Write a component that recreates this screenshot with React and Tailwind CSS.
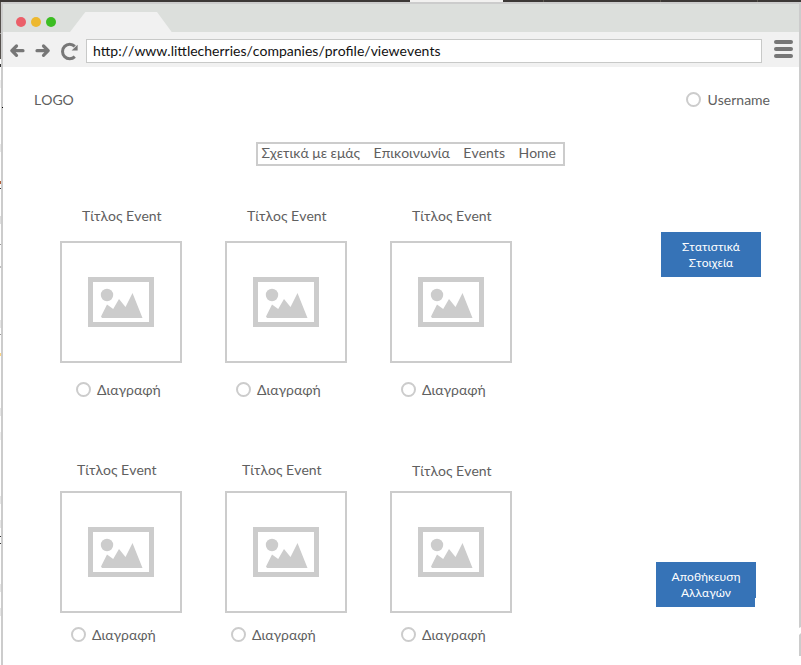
const rows = [
  [
    { title: 'pl-[22px]', action: 'pl-4' },
    { title: 'pl-[22px]', action: 'pl-[11px]' },
    { title: 'pl-[22px]', action: 'pl-[11px]' },
  ],
  [
    { title: 'pl-[17px]', action: 'pl-[11px]' },
    { title: 'pl-[17px]', action: 'pl-[6px]' },
    { title: 'pl-[22px] pt-px', action: 'pl-[11px]' },
  ],
];

const specks = [
  'top-[2px] h-[57px] bg-[#55504c]',
  'top-[33px] h-px bg-[#a5a2a0]',
  'top-[59px] h-[5px] bg-white',
  'top-[64px] h-[3px] bg-[#333333]',
  'top-[80px] h-[8px] bg-[#eeeeee]',
  'top-[144px] h-[8px] bg-[#e8e8e8]',
  'top-[181px] h-[3px] bg-[#b5603a]',
  'top-[188px] h-px bg-[#333333]',
  'top-[216px] h-[8px] bg-[#dedede]',
  'top-[244px] h-px bg-[#999999]',
  'top-[266px] h-[2px] bg-[#c0c0c0]',
  'top-[320px] h-[8px] bg-[#e6e6e6]',
  'top-[334px] h-px bg-[#999999]',
  'top-[353px] h-[3px] bg-[#ffd580]',
  'top-[408px] h-[8px] bg-[#e6e6e6]',
  'top-[432px] h-[8px] bg-[#eeeeee]',
  'top-[496px] h-[8px] bg-[#e6e6e6]',
  'top-[520px] h-[8px] bg-[#e6e6e6]',
  'top-[536px] h-px bg-[#333333]',
  'top-[543px] h-px bg-[#333333]',
  'top-[584px] h-[8px] bg-[#e6e6e6]',
  'top-[608px] h-[8px] bg-[#e6e6e6]',
];

function Radio() {
  return <span className="mb-px size-[15px] shrink-0 rounded-full border-2 border-[#cccccc] bg-white" />;
}

function Placeholder() {
  return (
    <div className="flex size-[122px] shrink-0 items-center justify-center border-2 border-[#cccccc]">
      <svg width="66" height="50" viewBox="0 0 66 50" fill="#cccccc">
        <path fillRule="evenodd" d="M0 0H66V50H0ZM5 5V45H61V5Z" />
        <circle cx="19" cy="18" r="6.2" />
        <path d="M13 39.5L19 27.5L25.2 32L31 22L37.5 30L44.5 16L54.5 41H14Z" />
      </svg>
    </div>
  );
}

function EventCard({ title, action, second }) {
  return (
    <div className="flex w-[122px] flex-col">
      <div className={`whitespace-nowrap leading-5 ${second ? 'h-[31px]' : 'h-[35px]'} ${title}`}>Τίτλος Event</div>
      <Placeholder />
      <div className={`flex items-center gap-[6px] whitespace-nowrap leading-5 ${second ? 'mt-3' : 'mt-[17px]'} ${action}`}>
        <Radio />
        <span>Διαγραφή</span>
      </div>
    </div>
  );
}

function Toolbar() {
  return (
    <div className="flex h-[35px] items-center bg-[#f1f1f1]">
      <svg className="shrink-0" width="83" height="35" fill="none" stroke="#777777" strokeWidth="3.2" strokeLinecap="round" strokeLinejoin="round">
        <path d="M20 18.7H9.5M13.5 14L8.8 18.7L13.5 23.4" />
        <path d="M34 18.7H44.5M40.5 14L45.2 18.7L40.5 23.4" />
        <path d="M71.8 24.6A7.2 7.2 0 1 1 71.8 14.4" strokeWidth="3" strokeLinecap="butt" />
        <path d="M74.6 12.8V18.4H68.6Z" fill="#777777" stroke="none" />
      </svg>
      <div className="mt-[3px] flex h-6 w-[676px] items-center border border-[#c8c9c8] bg-white pl-[6px] text-[14px] leading-5 text-[#111111]">
        http://www.littlecherries/companies/profile/viewevents
      </div>
      <div className="-mt-px ml-3 flex w-[19px] flex-col gap-[3px]">
        <span className="h-1 rounded-full bg-[#777777]" />
        <span className="h-1 rounded-full bg-[#777777]" />
        <span className="h-1 rounded-full bg-[#777777]" />
      </div>
    </div>
  );
}

export default function App() {
  return (
    <div className="relative h-[665px] w-[801px] overflow-hidden bg-white font-['Lato','Noto_Sans',sans-serif] text-[14px] text-[#606060] [font-kerning:none]">
      <div className="flex h-[2px] bg-[#3c3836]">
        <span className="ml-[410px] w-[93px] bg-[#f2f1f0]" />
        <span className="ml-[40px] w-px bg-[#5b574f]" />
        <span className="ml-[116px] w-px bg-[#5b574f]" />
        <span className="ml-[96px] w-px bg-[#5b574f]" />
      </div>
      <div className="ml-px h-[663px] border-x-2 border-t-2 border-[#cccccc] bg-white">
        <div className="flex h-7 bg-[#dcdfdc]">
          <div className="flex w-[67px] items-start gap-[5.5px] pl-[13.3px] pt-[13px]">
            <span className="size-[9.5px] shrink-0 rounded-full bg-[#eb5f69]" />
            <span className="size-[9.5px] shrink-0 rounded-full bg-[#edb82f]" />
            <span className="size-[9.5px] shrink-0 rounded-full bg-[#3bbd22]" />
          </div>
          <svg width="102" height="28" fill="#f1f1f1"><path d="M0 28L15.3 8H87L101.7 28Z" /></svg>
        </div>
        <Toolbar />
        <header className="flex h-[75px] items-start justify-between pl-[31px] pr-[29px] pt-[23px] leading-5">
          <span>LOGO</span>
          <span className="flex items-center gap-[6px]"><Radio />Username</span>
        </header>
        <nav className="ml-[253px] flex h-6 w-[309px] items-center gap-[13.5px] whitespace-nowrap border-2 border-[#cccccc] pb-[2px] pl-[3.5px] leading-[18px]">
          <span>Σχετικά με εμάς</span>
          <span>Επικοινωνία</span>
          <span>Events</span>
          <span>Home</span>
        </nav>
        <main className="flex pl-[57px]">
          <section className="pt-10">
            {rows.map((row, i) => (
              <div key={i} className={`flex gap-[43px] ${i ? 'pt-[60px]' : ''}`}>
                {row.map((card, j) => <EventCard key={j} {...card} second={i === 1} />)}
              </div>
            ))}
          </section>
          <aside className="ml-36 pt-[66px] text-[12px] leading-4 text-white">
            <button className="ml-[5px] block h-[45px] w-[100px] bg-[#3673b7]">Στατιστικά<br />Στοιχεία</button>
            <button className="mt-[285px] block h-[45px] w-[100px] bg-[#3673b7] [clip-path:polygon(0_0,100%_0,100%_36px,99px_36px,99px_100%,0_100%)]">Αποθήκευση<br />Αλλαγών</button>
          </aside>
        </main>
      </div>
      {specks.map((speck) => <span key={speck} className={`absolute left-0 w-px ${speck}`} />)}
      <span className="absolute left-[2px] top-[107px] size-px bg-black" />
      <span className="absolute left-[799px] top-[627px] h-[8px] w-[2px] bg-white [clip-path:polygon(0_1px,100%_0,100%_6px,0_100%)]" />
      <span className="absolute left-[799px] top-[656px] h-[9px] w-[2px] bg-white" />
    </div>
  );
}
